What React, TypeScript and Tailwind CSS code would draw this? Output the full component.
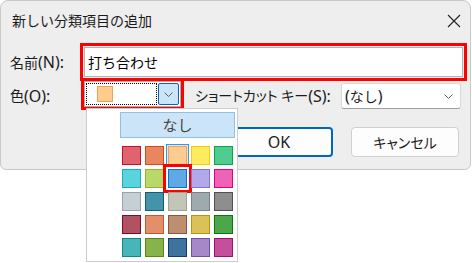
import React from "react";

const swatches: [string, string][] = [
  ["#e0646e", "#c8102e"],
  ["#e8865f", "#d24c1a"],
  ["#ffcc8f", "#f0a050"],
  ["#ffeb5f", "#f5d000"],
  ["#4fcc8f", "#10a050"],
  ["#5bd3dc", "#10b0c0"],
  ["#b8d96a", "#90b820"],
  ["#5ea9e6", "#1070c8"],
  ["#b1a9ea", "#8a70d0"],
  ["#ef63b5", "#e00080"],
  ["#c6cfd3", "#98a4a8"],
  ["#4394a8", "#105e78"],
  ["#c3c5b9", "#a0a290"],
  ["#9eaaaf", "#74848a"],
  ["#8e8e8e", "#505050"],
  ["#b15162", "#7a1028"],
  ["#e1906a", "#c05a30"],
  ["#bd8f70", "#8a5a38"],
  ["#dbc157", "#b89810"],
  ["#4ca64c", "#0b7a0b"],
  ["#4ab5b8", "#108888"],
  ["#87b34c", "#5a8810"],
  ["#3e739d", "#103e6a"],
  ["#a688c8", "#7050a8"],
  ["#c3509a", "#a01070"],
];

const Chevron = () => (
  <svg width="9" height="5" viewBox="0 0 9 5" fill="none">
    <path d="M0.5 0.5 L4.5 4.5 L8.5 0.5" stroke="#5f5f5f" strokeWidth="1" />
  </svg>
);

// latin part of a label, a bit larger like Segoe UI next to the kana
const Latin = ({ children }: { children: React.ReactNode }) => (
  <span className="text-[16px]">{children}</span>
);

const ColorPopup = () => {
  return (
    <div className="absolute left-[86px] top-[108px] w-[152px] h-[154px] bg-white border border-[#cccccc]">
      <div className="mt-[3px] ml-[33px] w-[115px] h-[26px] bg-[#cce4f7] border border-[#8cc2ea] flex items-center justify-center text-[15px] text-[#444]">
        なし
      </div>
      <div className="mt-[8px] ml-[35px] grid grid-cols-[repeat(5,19px)] gap-[4px]">
        {swatches.map(([fill, edge], i) => {
          let extra = "";
          if (i === 2) extra = "shadow-[0_0_0_1px_#d6eaf8,0_0_0_2px_#3c96dc]";
          if (i === 7) extra = "shadow-[0_0_0_2px_#ffffff,0_0_0_5px_#ff0000]";
          return (
            <div
              key={i}
              className={`w-[19px] h-[19px] border ${extra}`}
              style={{ backgroundColor: fill, borderColor: edge }}
            />
          );
        })}
      </div>
    </div>
  );
};

export default function App() {
  return (
    <div
      className="relative w-[472px] h-[263px] bg-white text-[#1b1b1b]"
      style={{ fontFamily: '"Noto Sans", "Noto Sans CJK JP", sans-serif' }}
    >
      <div className="w-[471px] h-[170px] bg-[#eeeeee] border border-[#c9c9c9] rounded-t-[8px] rounded-b-[6px] flex flex-col">
        {/* title bar */}
        <div className="h-[39px] pl-[11px] pr-[9px] flex items-center justify-between">
          <span className="text-[14px]">新しい分類項目の追加</span>
          <svg width="14" height="14" viewBox="0 0 14 14">
            <path d="M1 1 L13 13 M13 1 L1 13" stroke="#222" strokeWidth="1.1" />
          </svg>
        </div>

        {/* name row */}
        <div className="flex items-center mt-[3px] pl-[9px]">
          <span className="w-[70px] text-[14px] whitespace-nowrap">
            名前<Latin>(N):</Latin>
          </span>
          <div className="w-[387px] h-[38px] border-[3px] border-[#ff0000] p-[1px]">
            <div className="h-full bg-white border border-[#b4b4b4] flex items-center pl-[3px] text-[14px] text-black">
              打ち合わせ
            </div>
          </div>
        </div>

        {/* color / shortcut row */}
        <div className="flex items-start mt-[-3px] pl-[9px]">
          <span className="w-[71px] h-[32px] flex items-center pt-[3px] text-[14px] whitespace-nowrap">
            色<Latin>(O):</Latin>
          </span>
          <div className="w-[103px] h-[32px] border-[3px] border-[#ff0000]">
            <div className="h-full bg-white border border-[#adadad] flex p-[1px] gap-[1px]">
              <div className="flex-1 border border-dotted border-black flex items-center pl-[10px]">
                <div className="w-[16px] h-[16px] bg-[#ffcc8f] border border-[#f0a050]" />
              </div>
              <div className="w-[21px] bg-[#cce4f7] border border-[#0067c0] rounded-[2px] flex items-center justify-center">
                <Chevron />
              </div>
            </div>
          </div>
          <span className="ml-[11px] h-[32px] flex items-center pt-[3px] text-[14px] whitespace-nowrap [font-feature-settings:'palt']">
            ショートカット キー<Latin>(S):</Latin>
          </span>
          <div className="ml-auto mr-[9px] mt-[5px] w-[120px] h-[26px] bg-white border border-[#d9d9d9] border-b-[#a0a0a0] rounded-[3px] flex items-center justify-between pl-[3px] pr-[7px] text-[14px]">
            <span className="whitespace-nowrap">
              <Latin>(</Latin>なし<Latin>)</Latin>
            </span>
            <Chevron />
          </div>
        </div>

        {/* buttons */}
        <div className="flex justify-end gap-[18px] mt-[17px] pr-[11px]">
          <button className="w-[108px] h-[30px] bg-[#fdfdfd] border-2 border-[#0067c0] rounded-[4px] text-[16px]">
            OK
          </button>
          <button className="w-[108px] h-[30px] bg-[#fdfdfd] border border-[#d0d0d0] rounded-[4px] text-[14px] [font-feature-settings:'palt']">
            キャンセル
          </button>
        </div>
      </div>

      <ColorPopup />
    </div>
  );
}
